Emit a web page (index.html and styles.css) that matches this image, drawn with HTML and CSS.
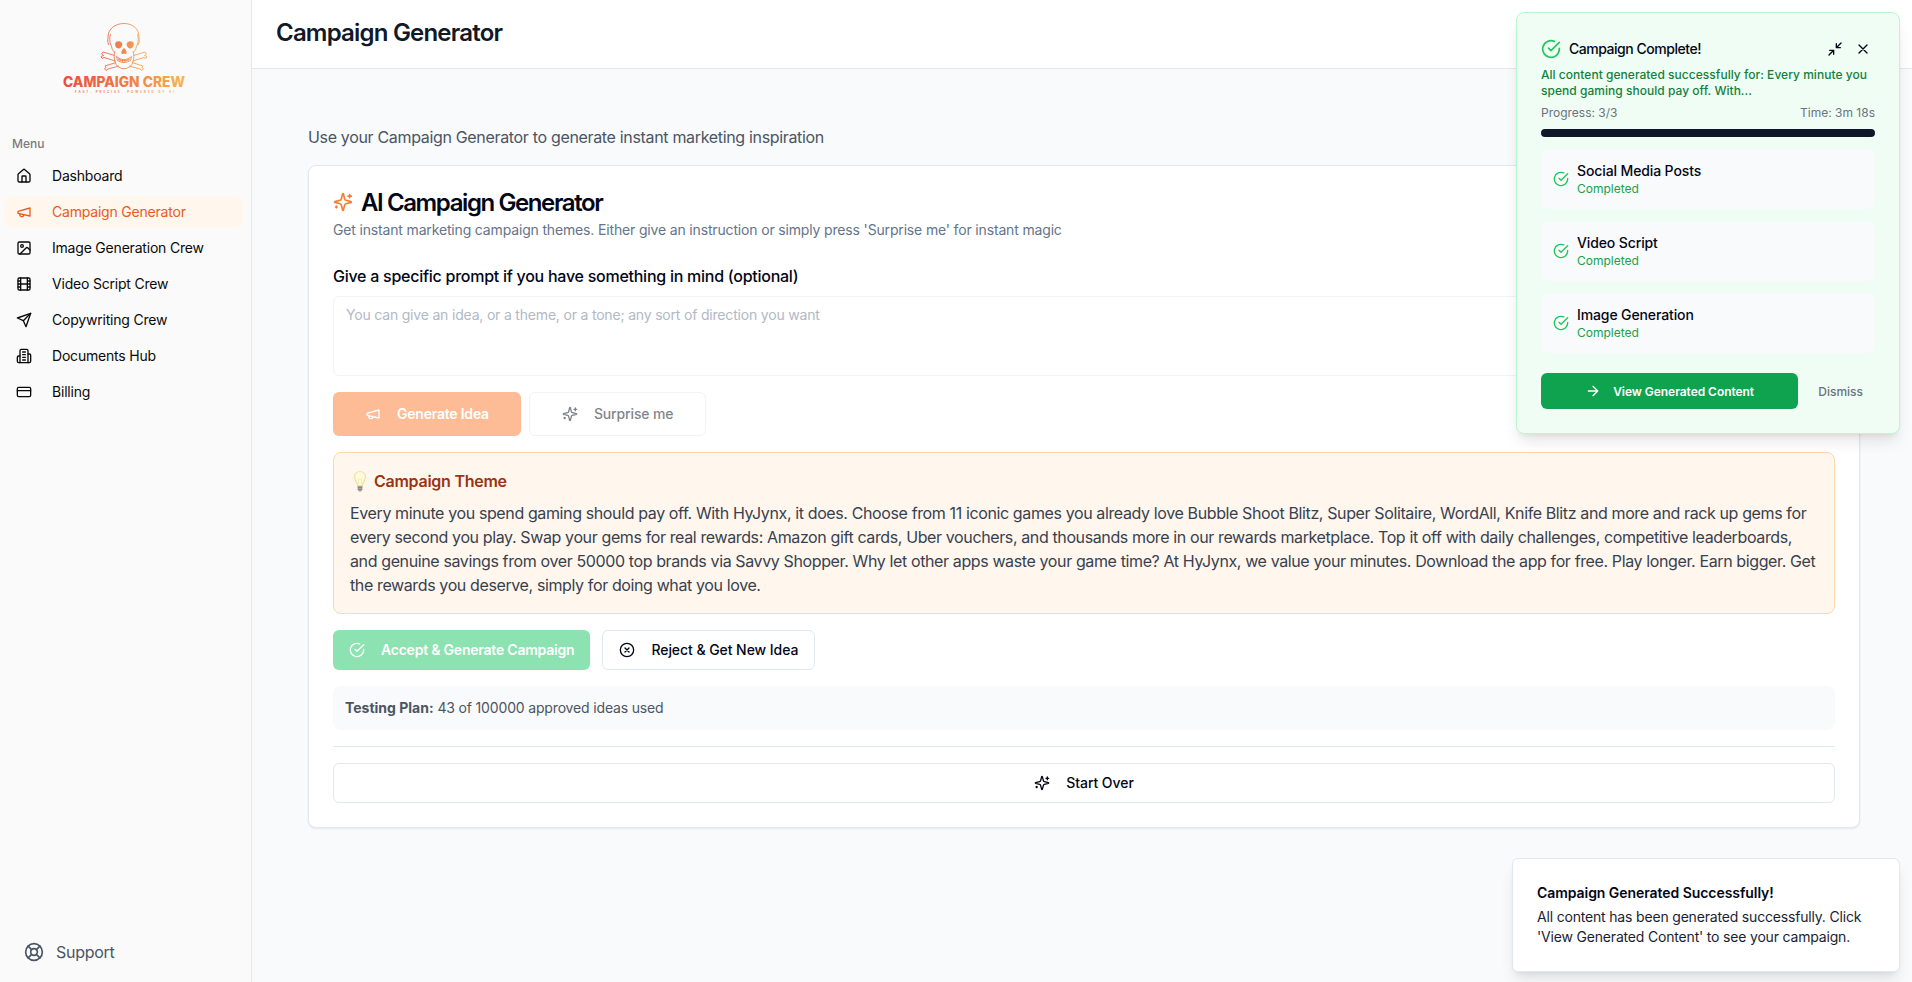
FILE: index.html
```html
<!DOCTYPE html>
<html lang="en">
<head>
    <meta charset="UTF-8">
    <meta name="viewport" content="width=device-width, initial-scale=1.0">
    <title>Campaign Generator</title>
    <link rel="stylesheet" href="styles.css">
</head>
<body>

<!-- Icon set -->
<svg class="sprite">
    <symbol id="home" viewBox="0 0 24 24"><path d="M15 21v-8a1 1 0 0 0-1-1h-4a1 1 0 0 0-1 1v8"/><path d="M3 10a2 2 0 0 1 .709-1.528l7-5.999a2 2 0 0 1 2.582 0l7 5.999A2 2 0 0 1 21 10v9a2 2 0 0 1-2 2H5a2 2 0 0 1-2-2z"/></symbol>
    <symbol id="megaphone" viewBox="0 0 24 24"><path d="m3 11 18-5v12L3 14v-3z"/><path d="M11.6 16.8a3 3 0 1 1-5.8-1.6"/></symbol>
    <symbol id="image" viewBox="0 0 24 24"><rect x="3" y="3" width="18" height="18" rx="2"/><circle cx="9" cy="9" r="2"/><path d="m21 15-3.086-3.086a2 2 0 0 0-2.828 0L6 21"/></symbol>
    <symbol id="film" viewBox="0 0 24 24"><rect x="3" y="3" width="18" height="18" rx="2"/><path d="M7 3v18M3 7.5h4M3 12h18M3 16.5h4M17 3v18M17 7.5h4M17 16.5h4"/></symbol>
    <symbol id="send" viewBox="0 0 24 24"><path d="m22 2-7 20-4-9-9-4Z"/><path d="M22 2 11 13"/></symbol>
    <symbol id="building" viewBox="0 0 24 24"><path d="M6 22V4a2 2 0 0 1 2-2h8a2 2 0 0 1 2 2v18Z"/><path d="M6 12H4a2 2 0 0 0-2 2v6a2 2 0 0 0 2 2h2"/><path d="M18 9h2a2 2 0 0 1 2 2v9a2 2 0 0 1-2 2h-2"/><path d="M10 6h4M10 10h4M10 14h4M10 18h4"/></symbol>
    <symbol id="card-icon" viewBox="0 0 24 24"><rect x="2" y="5" width="20" height="14" rx="2"/><path d="M2 10h20"/></symbol>
    <symbol id="lifebuoy" viewBox="0 0 24 24"><circle cx="12" cy="12" r="10"/><path d="m4.93 4.93 4.24 4.24M14.83 9.17l4.24-4.24M14.83 14.83l4.24 4.24M9.17 14.83l-4.24 4.24"/><circle cx="12" cy="12" r="4"/></symbol>
    <symbol id="sparkles" viewBox="0 0 24 24"><path d="M9.937 15.5A2 2 0 0 0 8.5 14.063l-6.135-1.582a.5.5 0 0 1 0-.962L8.5 9.936A2 2 0 0 0 9.937 8.5l1.582-6.135a.5.5 0 0 1 .963 0L14.063 8.5A2 2 0 0 0 15.5 9.937l6.135 1.581a.5.5 0 0 1 0 .964L15.5 14.063a2 2 0 0 0-1.437 1.437l-1.582 6.135a.5.5 0 0 1-.963 0z"/><path d="M20 3v4M22 5h-4M4 17v2M5 18H3"/></symbol>
    <symbol id="check" viewBox="0 0 24 24"><path d="M22 11.08V12a10 10 0 1 1-5.93-9.14"/><path d="m9 11 3 3L22 4"/></symbol>
    <symbol id="circle-x" viewBox="0 0 24 24"><circle cx="12" cy="12" r="10"/><path d="m15 9-6 6M9 9l6 6"/></symbol>
    <symbol id="minimize" viewBox="0 0 24 24"><path d="M4 14h6v6M20 10h-6V4M14 10l7-7M3 21l7-7"/></symbol>
    <symbol id="close" viewBox="0 0 24 24"><path d="M18 6 6 18M6 6l12 12"/></symbol>
    <symbol id="arrow" viewBox="0 0 24 24"><path d="M5 12h14M12 5l7 7-7 7"/></symbol>
</svg>

<div class="layout">
    <!-- Sidebar -->
    <aside class="sidebar">
        <svg class="logo" viewBox="0 0 130 76">
            <defs>
                <linearGradient id="skull-fill" gradientUnits="userSpaceOnUse" x1="42" y1="0" x2="88" y2="0">
                    <stop offset="0" stop-color="#ec5e48"/>
                    <stop offset="1" stop-color="#f8b254"/>
                </linearGradient>
                <linearGradient id="word-fill" gradientUnits="userSpaceOnUse" x1="4" y1="0" x2="126" y2="0">
                    <stop offset="0" stop-color="#ea4c42"/>
                    <stop offset="0.5" stop-color="#f0793f"/>
                    <stop offset="1" stop-color="#f8b552"/>
                </linearGradient>
            </defs>
            <g fill="none" stroke="url(#skull-fill)" stroke-width="0.9" stroke-linejoin="round">
                <path d="M50 33c-2-3-1-5-1-8 0-8 7-13.500 16-13.500s15 5.500 15 13.500c0 3 1 5-1 8M51.500 22c-1.500 5-.5 10 1 12 .8 4 1 5 4 6M78.500 22c1.500 5 .5 10-1 12-.8 4-1 5-4 6"/>
                <path d="M55.500 40c-1 5 0 12 4 15q5.500 3.500 11 0c4-3 5-10 4-15"/>
                <path d="M57.500 44.500q7.500 6.500 15 0l-1 4q-6.500 4-13 0zM59 47q6 3.500 12 0M61 46.500v3M63.500 47v3M66 47v3M69 46.500v3"/>
                <path d="M55.500 43.500l-11.500-3.500-1.500 2 2 1.500-2.500 1 1 2 2-1L56.500 49M74.500 43.500l11.500-3.500 1.500 2-2 1.500 2.500 1-1 2-2-1L73.500 49"/>
                <path d="M57 50.500l-11 3.500 1 1.500-1.500 1 1.500 2 2-1.500 11-3M73 50.500l11 3.500-1 1.500 1.500 1-1.500 2-2-1.500-11-3"/>
            </g>
            <g fill="url(#skull-fill)">
                <path d="M56.500 30.500c2-1.800 5-1.800 6.500.5 1 2-.5 5-3 5.500-3 .3-4.500-3.500-3.500-6zM68 31c1.500-2.300 4.500-2.300 6.500-.5 1 2.500-.5 6.300-3.500 6-2.500-.5-4-3.500-3-5.500z"/>
                <path d="M65 36c2 1.500 3 4 2.500 5.500-1 1-1.500.3-2.500.3s-1.500.7-2.500-.3c-.5-1.500.5-4 2.500-5.500z"/>
            </g>
            <text class="logo-name" x="4" y="75" textLength="122" lengthAdjust="spacingAndGlyphs" fill="url(#word-fill)">CAMPAIGN CREW</text>
            <text class="logo-tag" x="16" y="81" textLength="99" fill="url(#word-fill)">FAST. PRECISE. POWERED BY AI</text>
        </svg>

        <div class="menu-label">Menu</div>
        <nav class="menu">
            <a class="menu-item"><svg class="icon"><use href="#home"/></svg>Dashboard</a>
            <a class="menu-item active"><svg class="icon"><use href="#megaphone"/></svg>Campaign Generator</a>
            <a class="menu-item"><svg class="icon"><use href="#image"/></svg>Image Generation Crew</a>
            <a class="menu-item"><svg class="icon"><use href="#film"/></svg>Video Script Crew</a>
            <a class="menu-item"><svg class="icon"><use href="#send"/></svg>Copywriting Crew</a>
            <a class="menu-item"><svg class="icon"><use href="#building"/></svg>Documents Hub</a>
            <a class="menu-item"><svg class="icon"><use href="#card-icon"/></svg>Billing</a>
        </nav>

        <a class="support"><svg class="icon icon-lg"><use href="#lifebuoy"/></svg>Support</a>
    </aside>

    <!-- Main content -->
    <main class="main">
        <header class="topbar"><h1>Campaign Generator</h1></header>

        <div class="content">
            <p class="intro">Use your Campaign Generator to generate instant marketing inspiration</p>

            <section class="card">
                <h2 class="card-title"><svg class="icon icon-lg"><use href="#sparkles"/></svg>AI Campaign Generator</h2>
                <p class="card-desc">Get instant marketing campaign themes. Either give an instruction or simply press 'Surprise me' for instant magic</p>

                <label class="prompt-label" for="prompt">Give a specific prompt if you have something in mind (optional)</label>
                <textarea id="prompt" class="prompt" placeholder="You can give an idea, or a theme, or a tone; any sort of direction you want" disabled></textarea>

                <div class="idea-buttons">
                    <button class="btn btn-lg btn-orange" disabled><svg class="icon"><use href="#megaphone"/></svg>Generate Idea</button>
                    <button class="btn btn-lg btn-outline faded" disabled><svg class="icon"><use href="#sparkles"/></svg>Surprise me</button>
                </div>

                <div class="theme">
                    <h3>
                        <svg class="bulb" viewBox="0 0 20 24">
                            <path d="M7.500 16.500c0-3-3-4.500-3-8.500a5.500 5.500 0 0 1 11 0c0 4-3 5.500-3 8.500z" fill="#fffbe0" stroke="#f5e09a" stroke-width="1.200"/>
                            <path d="M8.500 15V9.500l1.500 1 1.500-1V15" fill="none" stroke="#f6e5a6" stroke-width=".7"/>
                            <path d="M7.600 17h4.800v3.500L11 22.500H9l-1.400-2z" fill="#a3a39f"/>
                            <path d="M7.600 18.500h4.800M7.800 20.500h4.400" stroke="#77756f" stroke-width=".6"/>
                        </svg>
                        Campaign Theme
                    </h3>
                    <p>
                        Every minute you spend gaming should pay off. With HyJynx, it does. Choose from 11 iconic games you already love Bubble Shoot Blitz, Super Solitaire, WordAll, Knife Blitz and more and rack up gems for<br>
                        every second you play. Swap your gems for real rewards: Amazon gift cards, Uber vouchers, and thousands more in our rewards marketplace. Top it off with daily challenges, competitive leaderboards,<br>
                        and genuine savings from over 50000 top brands via Savvy Shopper. Why let other apps waste your game time? At HyJynx, we value your minutes. Download the app for free. Play longer. Earn bigger. Get<br>
                        the rewards you deserve, simply for doing what you love.
                    </p>
                </div>

                <div class="decision-buttons">
                    <button class="btn btn-green" disabled><svg class="icon"><use href="#check"/></svg>Accept &amp; Generate Campaign</button>
                    <button class="btn btn-outline"><svg class="icon"><use href="#circle-x"/></svg>Reject &amp; Get New Idea</button>
                </div>

                <div class="plan"><strong>Testing Plan:</strong> 43 of 100000 approved ideas used</div>

                <div class="restart">
                    <button class="btn btn-outline btn-full"><svg class="icon"><use href="#sparkles"/></svg>Start Over</button>
                </div>
            </section>
        </div>
    </main>
</div>

<!-- Progress popup -->
<div class="popup">
    <div class="popup-head">
        <svg class="icon icon-lg green"><use href="#check"/></svg>
        <span class="popup-title">Campaign Complete!</span>
        <svg class="icon"><use href="#minimize"/></svg>
        <svg class="icon popup-close"><use href="#close"/></svg>
    </div>
    <p class="popup-msg">All content generated successfully for: Every minute you spend gaming should pay off. With...</p>
    <div class="popup-stats"><span>Progress: 3/3</span><span>Time: 3m 18s</span></div>
    <div class="progress"></div>

    <div class="tasks">
        <div class="task">
            <svg class="icon green"><use href="#check"/></svg>
            <div><div class="task-name">Social Media Posts</div><div class="task-state">Completed</div></div>
        </div>
        <div class="task">
            <svg class="icon green"><use href="#check"/></svg>
            <div><div class="task-name">Video Script</div><div class="task-state">Completed</div></div>
        </div>
        <div class="task">
            <svg class="icon green"><use href="#check"/></svg>
            <div><div class="task-name">Image Generation</div><div class="task-state">Completed</div></div>
        </div>
    </div>

    <div class="popup-actions">
        <button class="view-btn"><svg class="icon"><use href="#arrow"/></svg>View Generated Content</button>
        <button class="dismiss-btn">Dismiss</button>
    </div>
</div>

<!-- Toast -->
<div class="toast">
    <div class="toast-title">Campaign Generated Successfully!</div>
    <div class="toast-text">All content has been generated successfully. Click 'View Generated Content' to see your campaign.</div>
</div>

</body>
</html>
```
FILE: styles.css
```css
* {
    box-sizing: border-box;
}

body {
    margin: 0;
    font-family: Inter, "Liberation Sans", sans-serif;
    font-size: 16px;
    line-height: 24px;
    color: #020617;
    background: #f9fafc;
    overflow: hidden;
}

h1, h2, h3, p {
    margin: 0;
}

button, textarea {
    font-family: inherit;
}

.sprite {
    display: none;
}

.icon {
    width: 16px;
    height: 16px;
    flex-shrink: 0;
    fill: none;
    stroke: currentColor;
    stroke-width: 2;
    stroke-linecap: round;
    stroke-linejoin: round;
}

.icon-lg {
    width: 20px;
    height: 20px;
}

.green {
    color: #22c55e;
}

.layout {
    display: flex;
    height: 100vh;
}

/* Sidebar */
.sidebar {
    width: 252px;
    flex-shrink: 0;
    display: flex;
    flex-direction: column;
    background: #fafafa;
    border-right: 1px solid #e5e7eb;
}

.logo {
    width: 130px;
    height: 76px;
    margin: 12px 0 0 59px;
    overflow: visible;
}

.logo-name {
    font-family: Inter, sans-serif;
    font-size: 14px;
    font-weight: 800;
}

.logo-tag {
    font-family: Inter, sans-serif;
    font-size: 3px;
    font-weight: 600;
}

.menu-label {
    margin: 48px 0 0 12px;
    height: 16px;
    font-size: 12px;
    line-height: 16px;
    font-weight: 500;
    color: #7b7b7d;
}

.menu {
    display: flex;
    flex-direction: column;
    gap: 4px;
    margin-top: 8px;
    padding: 0 8px 0 4px;
}

.menu-item {
    display: flex;
    align-items: center;
    gap: 20px;
    height: 32px;
    padding-left: 12px;
    border-radius: 8px;
    font-size: 14px;
    letter-spacing: -0.2px;
    color: #0a0a0a;
}

.menu-item.active {
    background: #fff7ed;
    color: #ea5b21;
}

.support {
    display: flex;
    align-items: center;
    gap: 12px;
    margin: auto 0 18px 24px;
    letter-spacing: -0.28px;
    color: #4b5563;
}

/* Main */
.main {
    flex: 1;
    display: flex;
    flex-direction: column;
}

.topbar {
    height: 69px;
    padding: 17px 24px;
    background: #fff;
    border-bottom: 1px solid #e5e7eb;
}

.topbar h1 {
    font-size: 24px;
    line-height: 32px;
    font-weight: 600;
    letter-spacing: -0.8px;
    color: #111827;
}

.content {
    padding: 56px 52px 0 56px;
}

.intro {
    margin-bottom: 16px;
    letter-spacing: -0.33px;
    color: #4b5563;
}

.card {
    padding: 24px;
    background: #fff;
    border: 1px solid #e2e8f0;
    border-radius: 8px;
    box-shadow: 0 1px 2px rgba(0, 0, 0, 0.08);
}

.card-title {
    display: flex;
    align-items: center;
    gap: 8px;
    font-size: 24px;
    line-height: 26px;
    font-weight: 600;
    letter-spacing: -1.4px;
}

.card-title .icon {
    margin-bottom: 2px;
    color: #f97b35;
}

.card-desc {
    margin: 4px 0 24px;
    font-size: 14px;
    line-height: 20px;
    letter-spacing: -0.16px;
    color: #64748b;
}

.prompt-label {
    display: block;
    font-weight: 500;
    letter-spacing: -0.26px;
}

.prompt {
    display: block;
    width: 100%;
    height: 80px;
    margin: 8px 0 16px;
    padding: 8px 12px;
    border: 1px solid #f0f3f7;
    border-radius: 6px;
    background: #fff;
    font-size: 14px;
    line-height: 20px;
    letter-spacing: -0.19px;
    resize: none;
}

.prompt::placeholder {
    color: #b1b9c5;
}

.btn {
    display: inline-flex;
    align-items: center;
    justify-content: center;
    gap: 16px;
    height: 40px;
    padding: 0 16px;
    border: 0;
    border-radius: 6px;
    font-size: 14px;
    line-height: 20px;
    font-weight: 500;
    letter-spacing: -0.06px;
    color: #020617;
}

.btn-lg {
    height: 44px;
    padding: 0 32px;
}

.btn-orange, .btn-green {
    font-weight: 600;
    letter-spacing: -0.22px;
    color: #fff;
}

.btn-orange {
    background: #fdbb96;
}

.btn-green {
    background: #8ce2b0;
}

.btn-outline {
    background: #fff;
    border: 1px solid #e2e8f0;
}

.btn-full {
    width: 100%;
}

.faded {
    opacity: 0.5;
    letter-spacing: -0.14px;
}

.idea-buttons {
    display: flex;
    gap: 8px;
}

.theme {
    margin: 16px 0;
    padding: 16px;
    background: #fff7ed;
    border: 1px solid #fed7aa;
    border-radius: 8px;
}

.theme h3 {
    display: flex;
    align-items: center;
    gap: 4px;
    margin-bottom: 8px;
    font-size: 16px;
    font-weight: 600;
    letter-spacing: -0.26px;
    color: #9a3412;
}

.bulb {
    width: 20px;
    height: 24px;
}

.theme p {
    letter-spacing: -0.38px;
    white-space: nowrap;
    color: #374151;
}

.decision-buttons {
    display: flex;
    gap: 12px;
}

.plan {
    margin: 16px 0;
    padding: 12px;
    border-radius: 8px;
    background: #f9fafb;
    font-size: 14px;
    line-height: 20px;
    letter-spacing: -0.16px;
    color: #4b5563;
}

.plan strong {
    letter-spacing: 0;
}

.restart {
    padding-top: 16px;
    border-top: 1px solid #e2e8f0;
}

/* Progress popup */
.popup {
    position: absolute;
    top: 12px;
    right: 12px;
    width: 384px;
    padding: 24px;
    background: #f0fdf4;
    border: 1px solid #bbf7d0;
    border-radius: 8px;
    box-shadow: 0 10px 15px -3px rgba(0, 0, 0, 0.1), 0 4px 6px -4px rgba(0, 0, 0, 0.1);
}

.popup-head {
    display: flex;
    align-items: center;
    height: 24px;
}

.popup-title {
    flex: 1;
    margin-left: 8px;
    font-size: 14px;
    font-weight: 500;
    letter-spacing: -0.47px;
}

.popup-close {
    margin: 0 4px 0 12px;
}

.popup-msg {
    margin: 6px 0;
    font-size: 12px;
    line-height: 16px;
    font-weight: 500;
    letter-spacing: 0.03px;
    color: #15803d;
}

.popup-stats {
    display: flex;
    justify-content: space-between;
    font-size: 12px;
    line-height: 16px;
    color: #6b7280;
}

.progress {
    height: 8px;
    margin: 8px 0 12px;
    border-radius: 4px;
    background: #0f172a;
}

.tasks {
    display: flex;
    flex-direction: column;
    gap: 12px;
}

.task {
    display: flex;
    align-items: center;
    gap: 8px;
    padding: 12px;
    border-radius: 8px;
    background: #f9fafb;
}

.task-name {
    font-size: 14px;
    line-height: 20px;
    font-weight: 500;
    letter-spacing: -0.12px;
}

.task-state {
    font-size: 12px;
    line-height: 16px;
    color: #16a34a;
}

.popup-actions {
    display: flex;
    gap: 8px;
    margin-top: 20px;
}

.view-btn, .dismiss-btn {
    height: 36px;
    border: 0;
    border-radius: 6px;
    font-size: 12px;
    font-weight: 500;
}

.view-btn {
    flex: 1;
    display: flex;
    align-items: center;
    justify-content: center;
    gap: 12px;
    background: #10a34f;
    color: #fff;
    font-weight: 600;
    letter-spacing: -0.05px;
}

.dismiss-btn {
    padding: 0 12px;
    background: none;
    color: #6b7280;
}

/* Toast */
.toast {
    position: absolute;
    right: 12px;
    bottom: 10px;
    width: 388px;
    padding: 24px;
    background: #fff;
    border: 1px solid #e2e8f0;
    border-radius: 6px;
    box-shadow: 0 10px 15px -3px rgba(0, 0, 0, 0.1), 0 4px 6px -4px rgba(0, 0, 0, 0.1);
    font-size: 14px;
    line-height: 20px;
}

.toast-title {
    margin-bottom: 4px;
    font-weight: 600;
    letter-spacing: -0.06px;
}

.toast-text {
    letter-spacing: -0.18px;
    opacity: 0.9;
}
```
